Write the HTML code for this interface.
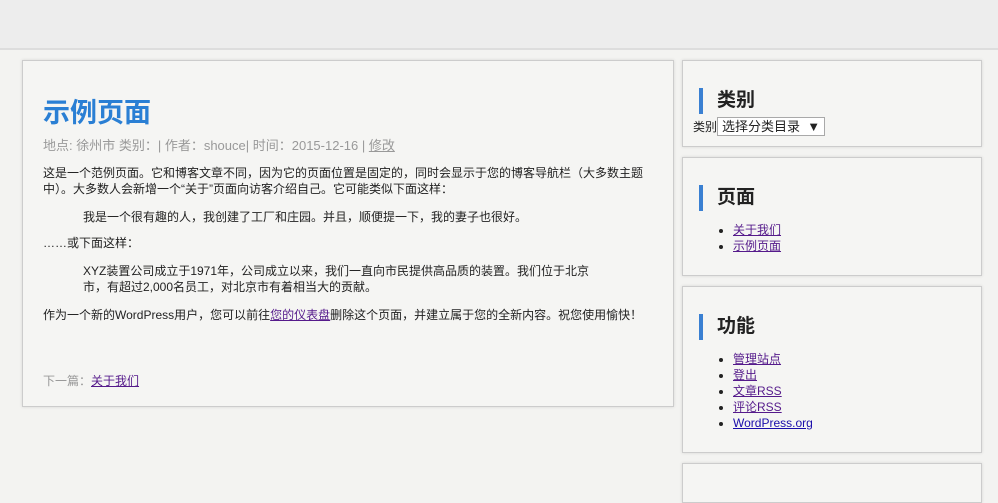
<!DOCTYPE html>
<html><head><meta charset="utf-8"><style>
body{margin:0;width:998px;height:478px;overflow:hidden;background:#f3f3f1;font-family:"Liberation Sans","Noto Sans CJK SC",sans-serif;color:#222;}
.top{position:absolute;left:0;top:0;width:998px;height:48px;background:#ededed;border-bottom:2px solid #ddd;}
.box{position:absolute;background:#f5f5f3;border:1px solid #ccc;box-shadow:0 0 3px rgba(0,0,0,.12);box-sizing:border-box;}
.main{left:22px;top:60px;width:652px;height:347px;}
h1{position:absolute;left:20px;top:30px;margin:0;font-size:27px;color:#2a7fd4;font-weight:bold;}
.meta{position:absolute;left:20px;top:74px;font-size:13px;color:#999;}
.meta a{color:#999;}
.txt{position:absolute;left:20px;top:104px;width:610px;font-size:12px;line-height:16px;}
.txt p{margin:0 0 8px;}
.txt .q{margin-left:40px;}
a{color:#551a8b;text-decoration:underline;}
.side{left:682px;width:300px;}
.side h3{position:absolute;left:16px;top:27px;margin:0;padding-left:14px;border-left:4px solid #3a80d2;font-size:19px;line-height:26px;height:26px;}
.side ul{position:absolute;left:50px;margin:0;padding:0;font-size:12px;line-height:16px;}
.sel{position:absolute;left:10px;top:56px;font-size:12px;}
.sel span{display:inline-block;border:1px solid #a9a9a9;background:#fff;padding:0 4px;height:17px;line-height:17px;font-size:13px;}
</style></head><body>
<div class="top"></div>
<div class="box main">
<h1>示例页面</h1>
<div class="meta">地点: 徐州市 类别：| 作者：shouce| 时间：2015-12-16 | <a>修改</a></div>
<div class="txt">
<p>这是一个范例页面。它和博客文章不同，因为它的页面位置是固定的，同时会显示于您的博客导航栏（大多数主题中）。大多数人会新增一个“关于”页面向访客介绍自己。它可能类似下面这样：</p>
<p class="q" style="margin-top:12px;margin-bottom:10px">我是一个很有趣的人，我创建了工厂和庄园。并且，顺便提一下，我的妻子也很好。</p>
<p>……或下面这样：</p>
<p class="q" style="width:520px;margin-top:12px;margin-bottom:12px">XYZ装置公司成立于1971年，公司成立以来，我们一直向市民提供高品质的装置。我们位于北京市，有超过2,000名员工，对北京市有着相当大的贡献。</p>
<p>作为一个新的WordPress用户，您可以前往<a>您的仪表盘</a>删除这个页面，并建立属于您的全新内容。祝您使用愉快！</p>
</div>
<div class="meta" style="top:311px;font-size:12px">下一篇：<a style="color:#551a8b">关于我们</a></div>
</div>
<div class="box side" style="top:60px;height:87px"><h3>类别</h3><div class="sel">类别<span>选择分类目录 &nbsp;▼</span></div></div>
<div class="box side" style="top:157px;height:119px"><h3>页面</h3><ul style="top:64px"><li><a>关于我们</a></li><li><a>示例页面</a></li></ul></div>
<div class="box side" style="top:286px;height:167px"><h3>功能</h3><ul style="top:64px"><li><a>管理站点</a></li><li><a>登出</a></li><li><a>文章RSS</a></li><li><a>评论RSS</a></li><li><a style="color:#1a0dab">WordPress.org</a></li></ul></div>
<div class="box side" style="top:463px;height:40px"></div>
</body></html>
